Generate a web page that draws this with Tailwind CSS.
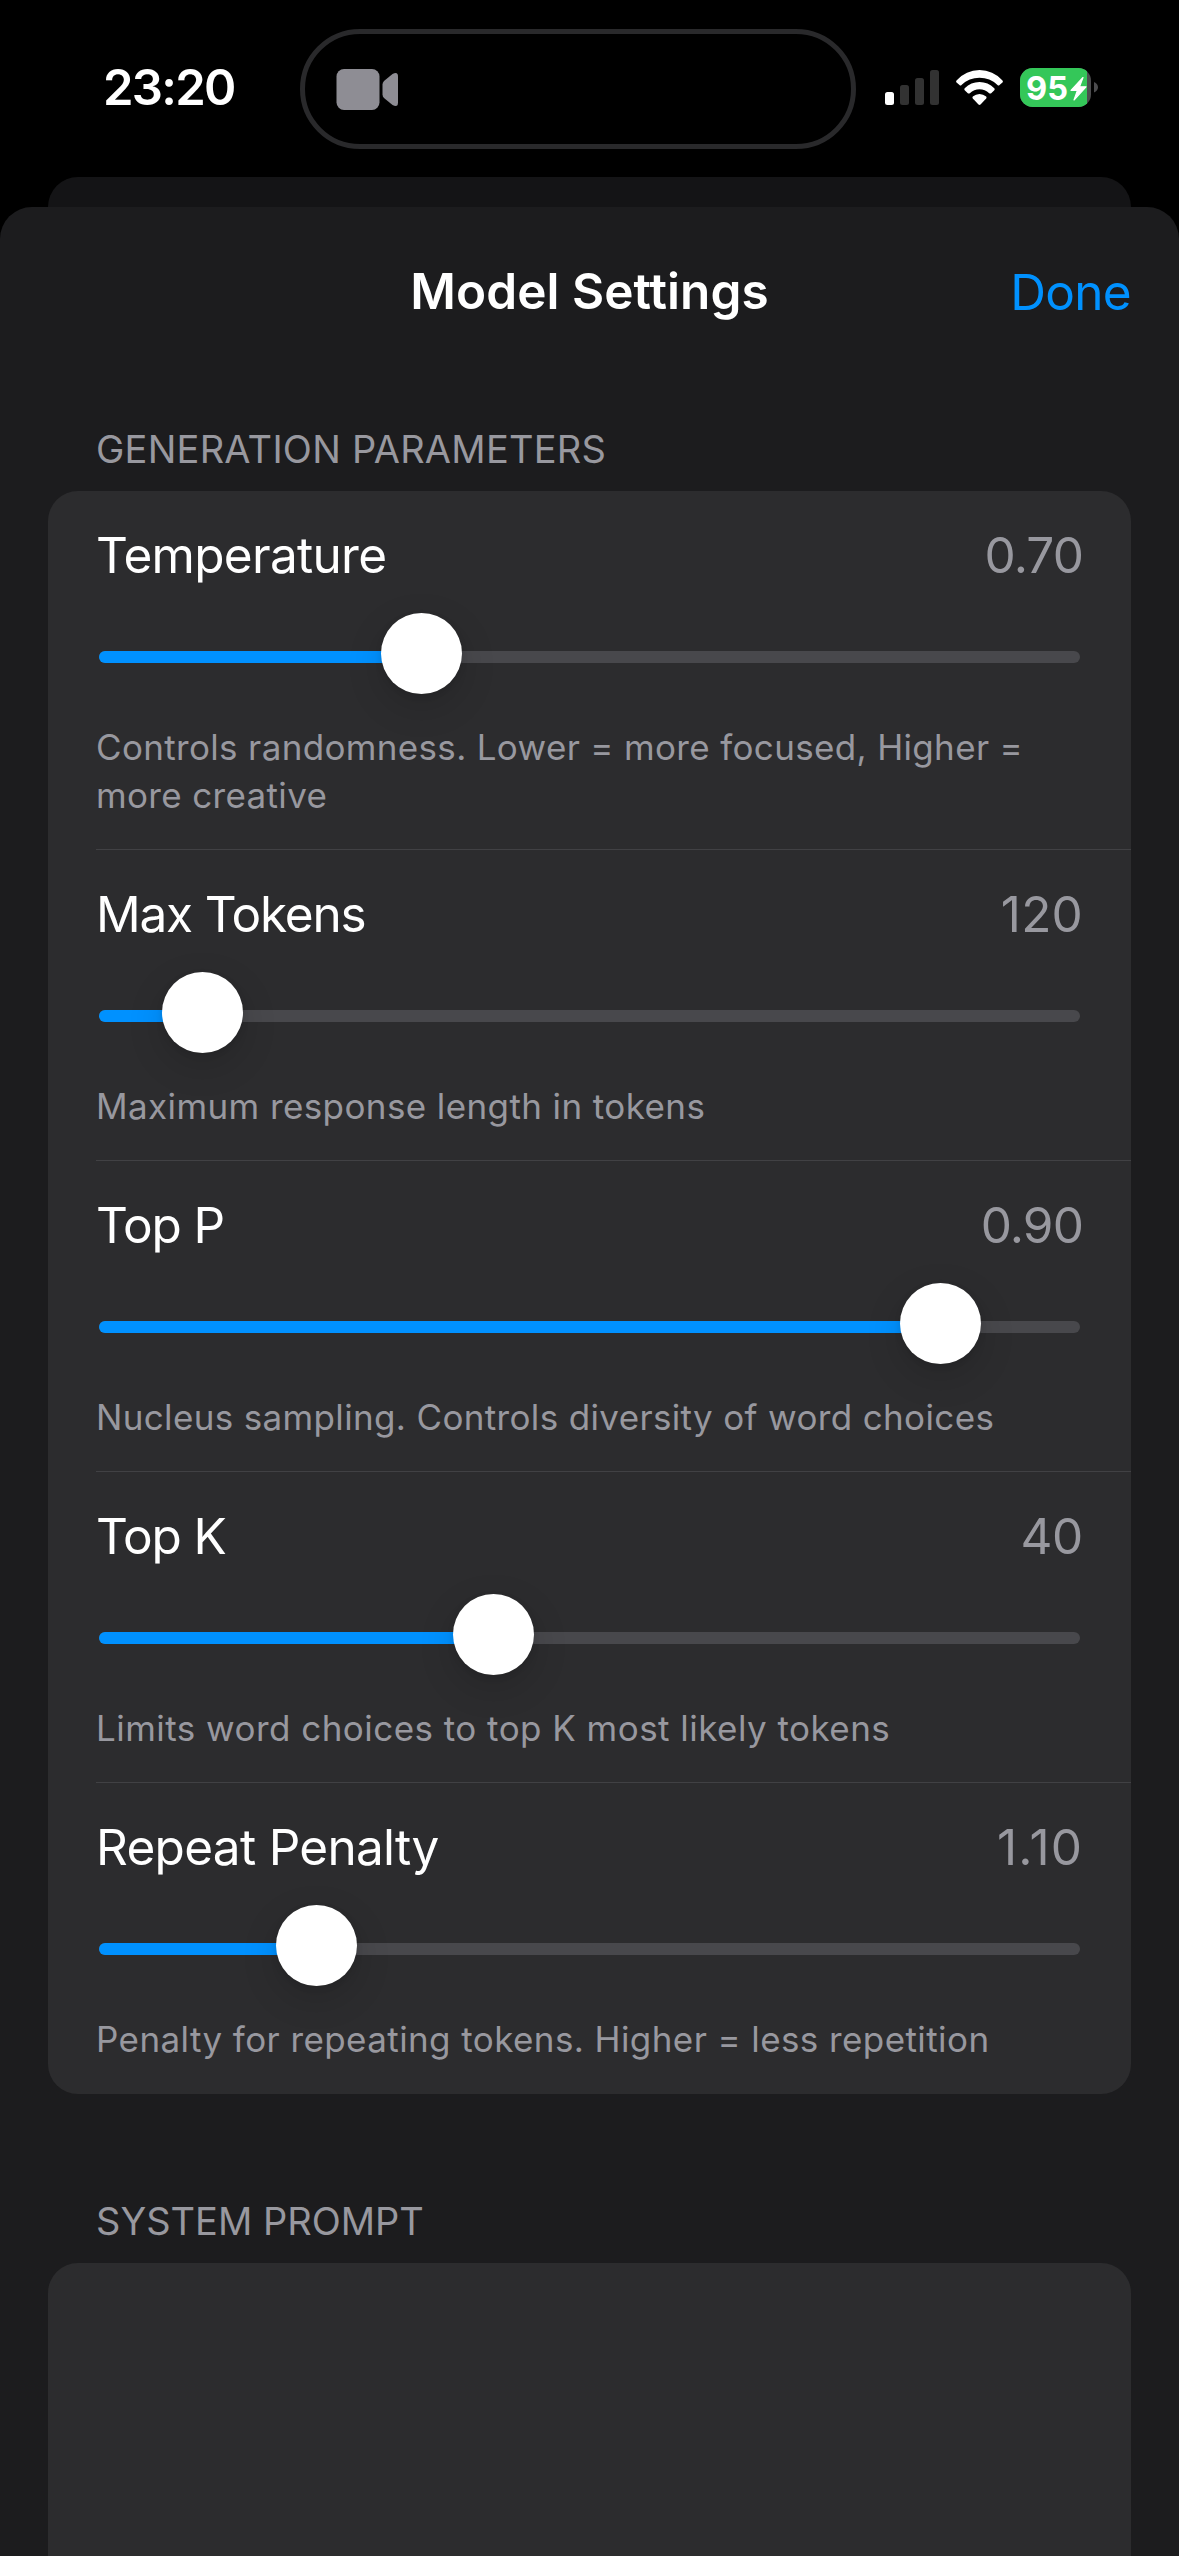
<!DOCTYPE html>
<html lang="en">
<head>
<meta charset="utf-8">
<title>Model Settings</title>
<script src="https://cdn.jsdelivr.net/npm/@tailwindcss/browser@4"></script>
</head>
<body class="bg-black">
<div class="w-[1179px] h-[2556px] overflow-hidden flex flex-col bg-black font-['Inter',sans-serif] text-white">
  <!-- status bar -->
  <header class="h-[177px] shrink-0 flex items-start">
    <div class="w-[300px] pl-[103px] pt-[58px] text-[49px] leading-[60px] font-semibold tracking-[-1.7px]">23:20</div>
    <div class="mt-[29px] w-[556px] h-[120px] rounded-full border-[5px] border-[#29292b] pl-[31px] pt-[34px]">
      <svg class="w-[64px] h-[44px]" viewBox="0 0 64 44" fill="#8e8d94"><rect x="0.5" y="1" width="43" height="41" rx="7.5"/><path d="M46.5 16.5Q46.500 14.500 48 13L56.500 6Q62 3 62 8.500V34.500Q62 40 56.500 37L48 30Q46.500 28.500 46.500 26.500Z"/></svg>
    </div>
    <svg class="ml-[29px] mt-[65px] w-[214px] h-[44px]" viewBox="885 65 214 44">
      <rect x="885" y="92" width="9" height="13" rx="2.500" fill="#fff"/>
      <g fill="#323232"><rect x="900" y="85" width="9" height="20" rx="2.500"/><rect x="915" y="78" width="9" height="27" rx="2.500"/><rect x="930" y="70" width="9" height="35" rx="2.500"/></g>
      <g fill="#fff"><path d="M956.500 80.500Q966 70 979.500 70Q993 70 1002.500 80.500Q1003.400 81.500 1002.500 82.500L999.500 85Q998.500 86 997.500 85Q990 77.800 979.500 77.800Q969 77.800 961.500 85Q960.500 86 959.500 85L956.500 82.500Q955.600 81.500 956.500 80.500Z"/><path d="M964.700 88.300Q971 82 979.500 82Q988 82 994.300 88.300Q995.200 89.300 994.300 90.300L991.200 93.200Q990.200 94 989.200 93.200Q985 89.300 979.500 89.300Q974 89.300 969.800 93.200Q968.800 94 967.800 93.200L964.700 90.300Q963.800 89.300 964.700 88.300Z"/><path d="M972.800 96.500Q975.800 94 979.500 94Q983.200 94 986.200 96.500Q987 97.500 986.200 98.500L980.500 104.500Q979.500 105.400 978.500 104.500L972.800 98.500Q972 97.500 972.800 96.500Z"/></g>
      <clipPath id="b"><rect x="1020" y="68" width="71" height="39" rx="12.500"/></clipPath>
      <g clip-path="url(#b)"><rect x="1020" y="68" width="71" height="39" fill="#4c4c4e"/><rect x="1020" y="68" width="67" height="39" fill="#34c759"/></g>
      <path d="M1094 82Q1098 84 1098 87.300Q1098 90.500 1094 92.500Z" fill="#4c4c4e"/>
      <text x="1026" y="99.500" font-size="33" font-weight="700" fill="#fff" textLength="42" lengthAdjust="spacingAndGlyphs">95</text>
      <path d="M1083 77.500L1071 90.300H1077.500L1074 100L1086 86.800H1079.500Z" fill="#fff" stroke="#fff" stroke-width="1.200" stroke-linejoin="round"/>
    </svg>
  </header>
  <div class="mx-12 h-[30px] shrink-0 rounded-t-[30px] bg-[#141416]"></div>
  <main class="grow bg-[#1c1c1e] rounded-t-[32px] px-12">
    <div class="h-[168px] pt-[54px] grid grid-cols-3 leading-[60px] text-[49.500px]">
      <h1 class="col-start-2 -mx-12 text-center font-semibold tracking-[0.05px] whitespace-nowrap">Model Settings</h1>
      <div class="pt-px text-right text-[#0091ff] tracking-[-0.7px]">Done</div>
    </div>
    <h2 class="h-[116px] pl-12 pt-[50px] text-[38px] leading-[48px] text-[#98989f] tracking-[0.25px]">GENERATION PARAMETERS</h2>
    <section id="params" class="bg-[#2c2c2e] rounded-[30px]"></section>
    <h2 class="h-[169px] pl-12 pt-[103px] text-[38px] leading-[48px] text-[#98989f]">SYSTEM PROMPT</h2>
    <section class="h-[400px] bg-[#2c2c2e] rounded-[30px]"></section>
  </main>
</div>
<script>
// name, value, thumb offset, note, then letter spacing of name, value and note
const rows = [
  ['Temperature', '0.70', 282, 'Controls randomness. Lower = more focused, Higher =<br>more creative', 'tracking-[-0.7px]', 'tracking-[-0.9px]', 'tracking-[0.34px]'],
  ['Max Tokens', '120', 63, 'Maximum response length in tokens', 'tracking-[-1.2px]', 'tracking-[0.2px]', 'tracking-[0.4px]'],
  ['Top P', '0.90', 801, 'Nucleus sampling. Controls diversity of word choices', 'tracking-[-1.1px]', 'tracking-[-0.9px]', 'tracking-[0.35px]'],
  ['Top K', '40', 354, 'Limits word choices to top K most likely tokens', 'tracking-[-1.1px]', 'tracking-[-0.3px]', 'tracking-[0.46px]'],
  ['Repeat Penalty', '1.10', 177, 'Penalty for repeating tokens. Higher = less repetition', 'tracking-[-0.7px]', 'tracking-[1.1px]', 'tracking-[0.41px]']
];
document.getElementById('params').innerHTML = rows.map(([name, value, x, note, nameT, valueT, noteT], i) => `
  <div class="pl-12">
    <div class="pt-[34px] pr-12 ${i < 4 ? 'border-b border-[#414144]' : 'pb-px'}">
      <div class="flex justify-between text-[49.5px] leading-[60px]"><span class="${nameT}">${name}</span><span class="text-[#98989f] ${valueT}">${value}</span></div>
      <div class="relative mt-[66px] ml-[3px] h-3 w-[981px] rounded-full bg-[#48484c]">
        <div class="h-3 rounded-l-full bg-[#0091ff]" style="width:${x + 40}px"></div>
        <div class="absolute -top-[38px] size-[81px] rounded-full bg-white shadow-[0_12px_36px_rgba(0,0,0,0.15),0_2px_6px_rgba(0,0,0,0.1)]" style="left:${x}px"></div>
      </div>
      <p class="pt-[60px] pb-[30px] text-[35px] leading-[48px] text-[#98989f] whitespace-nowrap ${noteT}">${note}</p>
    </div>
  </div>`).join('');
</script>
</body>
</html>
